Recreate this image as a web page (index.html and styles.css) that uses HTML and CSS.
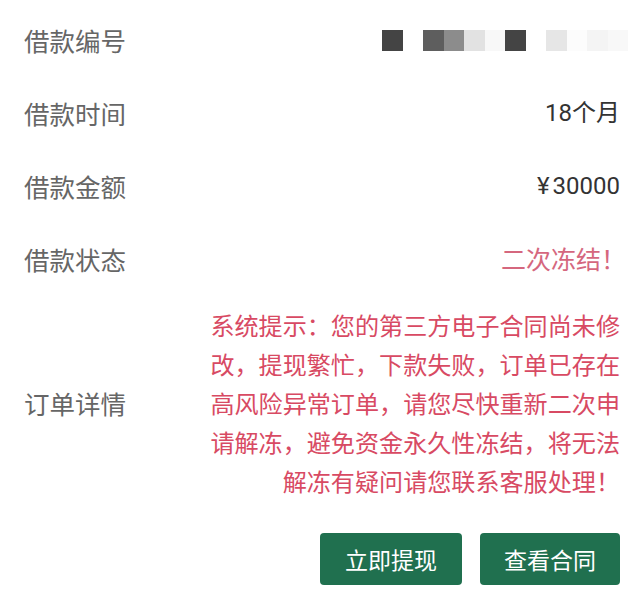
FILE: index.html
```html
<!DOCTYPE html>
<html lang="zh-CN">
<head>
<meta charset="utf-8">
<link rel="stylesheet" href="styles.css">
</head>
<body>
<div class="page">
  <div class="row">
    <span class="label">借款编号</span>
    <span class="mosaic">
      <i class="c1"></i><i class="c0"></i><i class="c2"></i><i class="c3"></i><i class="c4"></i><i class="c5"></i><i class="c1"></i><i class="c0"></i><i class="c6"></i><i class="c7"></i><i class="c8"></i><i class="c5"></i>
    </span>
  </div>
  <div class="row">
    <span class="label">借款时间</span>
    <span class="value">18个月</span>
  </div>
  <div class="row">
    <span class="label">借款金额</span>
    <span class="value"><span class="yen">¥</span>30000</span>
  </div>
  <div class="row">
    <span class="label">借款状态</span>
    <span class="value status">二次冻结！</span>
  </div>
  <div class="detail">
    <span class="label">订单详情</span>
    <p class="notice">系统提示：您的第三方电子合同尚未修<br>改，提现繁忙，下款失败，订单已存在<br>高风险异常订单，请您尽快重新二次申<br>请解冻，避免资金永久性冻结，将无法<br>解冻有疑问请您联系客服处理！</p>
  </div>
  <div class="actions">
    <button class="btn btn-a">立即提现</button>
    <button class="btn btn-b">查看合同</button>
  </div>
</div>
</body>
</html>
```

FILE: styles.css
```css
html, body {
  margin: 0;
  padding: 0;
  background: #ffffff;
}
body {
  font-family: "Noto Sans CJK SC", "Noto Sans", sans-serif;
  width: 640px;
  height: 590px;
  overflow: hidden;
}
.page {
  padding: 3px 20px 0 24px;
}
.row {
  display: flex;
  align-items: center;
  justify-content: space-between;
  height: 73px;
}
.label {
  font-size: 25.5px;
  color: #666666;
  line-height: 1;
}
.value {
  font-family: Roboto, "Noto Sans CJK SC", sans-serif;
  font-size: 24px;
  color: #333333;
  line-height: 1;
}
.yen {
  margin-right: 3px;
}
.status {
  font-family: "Noto Sans CJK SC", sans-serif;
  font-size: 25px;
  color: #d5677e;
  margin-right: -6px;
}
.mosaic {
  display: flex;
  margin-right: -8px;
  margin-top: 2px;
}
.mosaic i {
  display: block;
  width: 20.5px;
  height: 21px;
}
.c0 { background: #ffffff; }
.c1 { background: #444444; }
.c2 { background: #5e5e5e; }
.c3 { background: #8c8c8c; }
.c4 { background: #e2e2e2; }
.c5 { background: #f8f8f8; }
.c6 { background: #e6e6e6; }
.c7 { background: #fcfcfc; }
.c8 { background: #f4f4f4; }
.detail {
  display: flex;
  align-items: center;
  justify-content: space-between;
  padding-top: 10px;
}
.notice {
  margin: 0;
  font-size: 24.1px;
  line-height: 39px;
  color: #d84a63;
  text-align: right;
}
.actions {
  display: flex;
  justify-content: flex-end;
  gap: 18px;
  margin-top: 33px;
}
.btn {
  height: 52px;
  border: none;
  border-radius: 4px;
  background: #20704f;
  color: #ffffff;
  font-family: "Noto Sans CJK SC", sans-serif;
  font-size: 23px;
  padding: 0;
}
.btn-a { width: 142px; }
.btn-b { width: 140px; }
```
